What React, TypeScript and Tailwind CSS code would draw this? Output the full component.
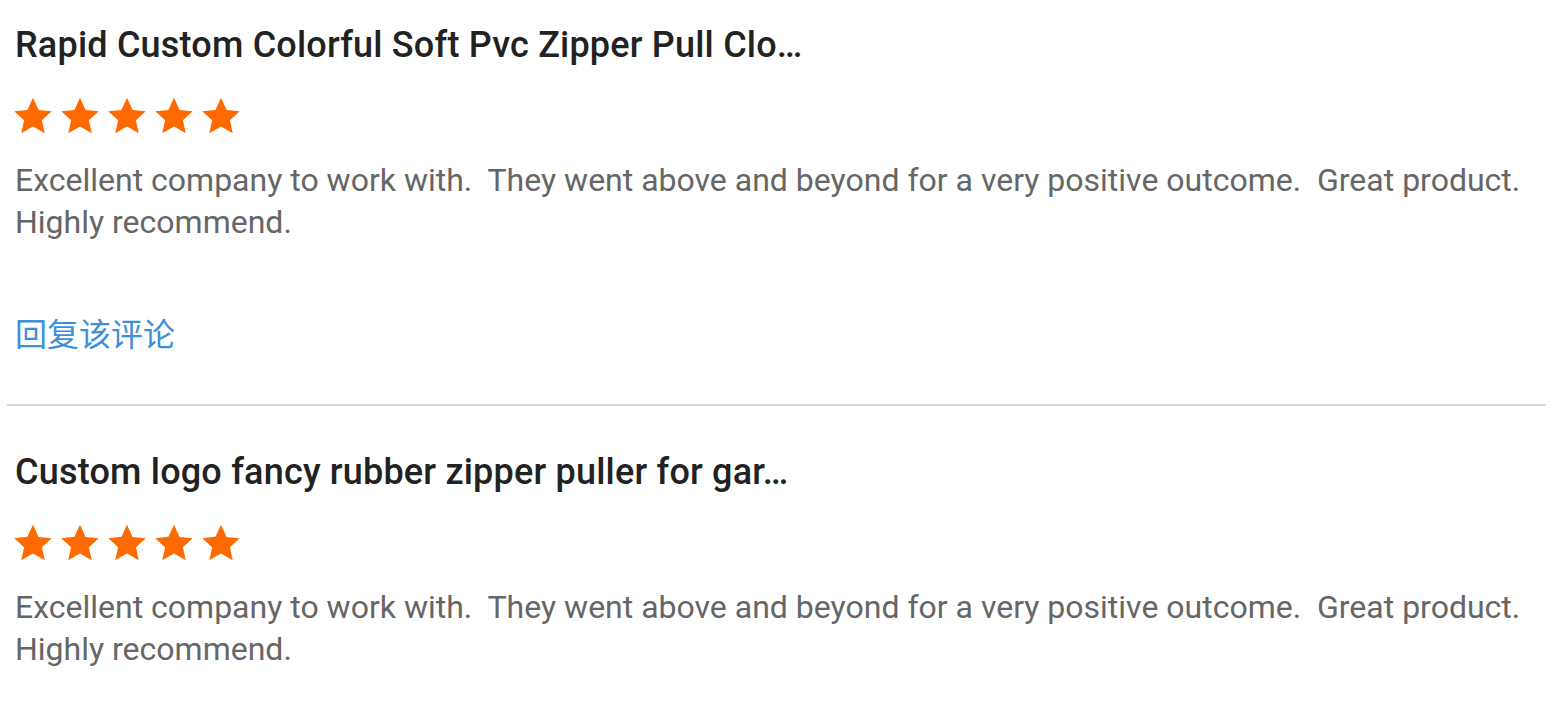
import { Fragment } from "react";

interface Review {
  title: string;
  rating: number;
  body: string;
  showReply?: boolean;
}

const reviews: Review[] = [
  {
    title: "Rapid Custom Colorful Soft Pvc Zipper Pull Clo…",
    rating: 5,
    body: "Excellent company to work with.\u00a0 They went above and beyond for a very positive outcome.\u00a0 Great product. Highly recommend.",
    showReply: true,
  },
  {
    title: "Custom logo fancy rubber zipper puller for gar…",
    rating: 5,
    body: "Excellent company to work with.\u00a0 They went above and beyond for a very positive outcome.\u00a0 Great product. Highly recommend.",
  },
];

function Star() {
  return (
    <svg viewBox="0 0 24 24" className="w-[42px] h-[42px]" fill="#ff6a00">
      <path d="M12 1.6l3.2 6.9 7.5.8-5.6 5.1 1.6 7.4L12 18l-6.7 3.8 1.6-7.4-5.6-5.1 7.5-.8z" />
    </svg>
  );
}

export default function App() {
  return (
    <div className="w-[1553px] min-h-[716px] bg-white font-['Roboto','Liberation_Sans',sans-serif]">
      {reviews.map((r, i) => (
        <Fragment key={i}>
          {i > 0 && <div className="mx-[7px] h-[2px] bg-[#d9d9d9]" />}
          <div className={`pl-[15px] pr-[10px] ${i === 0 ? "pt-[23px] pb-[52px]" : "pt-[44px]"}`}>
            <h3 className="text-[36px] leading-[44px] font-medium tracking-[0.2px] text-[#222222]">{r.title}</h3>
            <div className="flex gap-[5px] mt-[28px] -ml-[3px]">
              {Array.from({ length: r.rating }).map((_, k) => (
                <Star key={k} />
              ))}
            </div>
            <p className="mt-[22px] max-w-[1520px] text-[32px] leading-[42px] text-[#666666]">{r.body}</p>
            {r.showReply && (
              <a className="block mt-[69px] text-[32px] leading-[40px] text-[#3d8fd8] font-['Noto_Sans_CJK_SC',sans-serif]">
                回复该评论
              </a>
            )}
          </div>
        </Fragment>
      ))}
    </div>
  );
}
